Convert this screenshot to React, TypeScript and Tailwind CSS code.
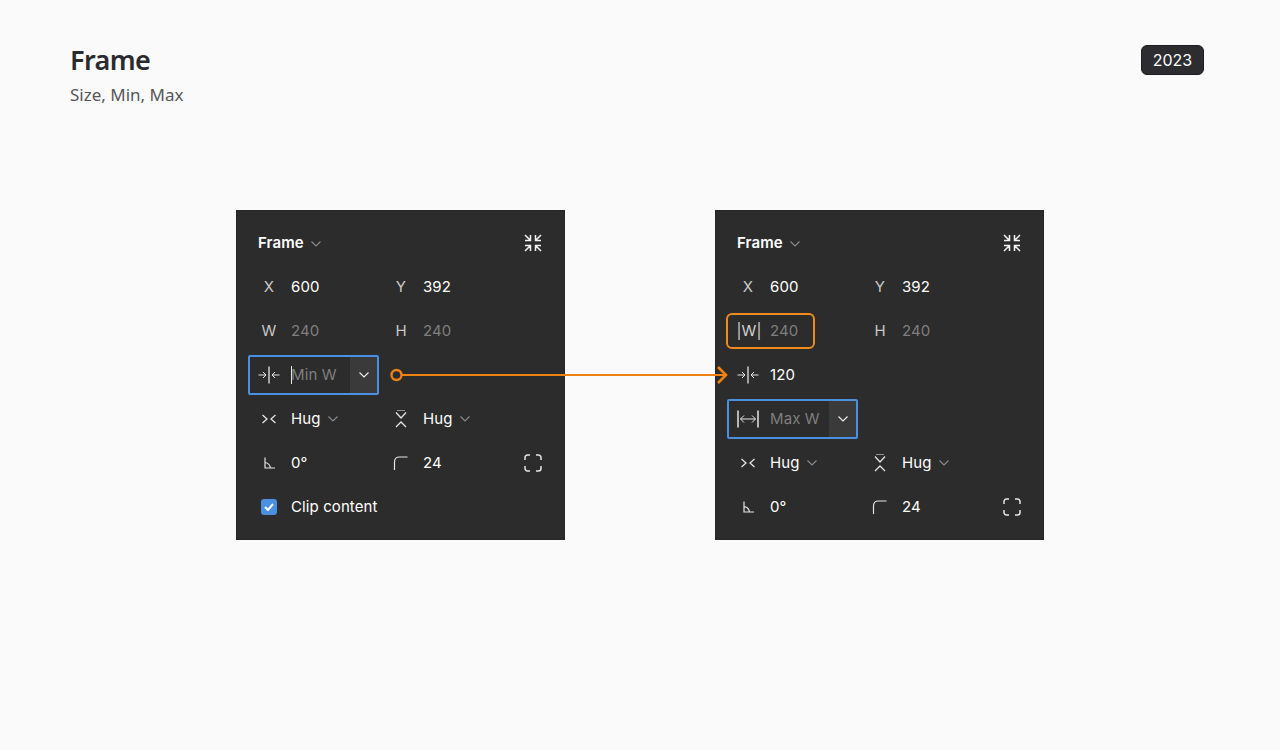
import React from 'react';

const S = { fill: 'none', stroke: 'currentColor', strokeWidth: 1 };

function Ico({ children, w = 24, h = 18 }: { children: React.ReactNode; w?: number; h?: number }) {
  return (
    <svg width={w} height={h} viewBox={`0 0 ${w} ${h}`} {...S} className="text-[#e4e4e4]">
      {children}
    </svg>
  );
}

const MinIcon = () => (
  <Ico>
    <path d="M12 .5v17" strokeWidth="1.300" />
    <path d="M1.500 9H9M6 6l3 3-3 3M22.500 9H15M18 6l-3 3 3 3" />
  </Ico>
);

const MaxIcon = () => (
  <Ico>
    <path d="M2 .5v17M22 .5v17" strokeWidth="1.500" />
    <path d="M4.500 9h15M8 5.500 4.500 9 8 12.500M16 5.500 19.500 9 16 12.500" />
  </Ico>
);

const HugH = () => (
  <Ico>
    <path d="m5.500 5 4.500 4-4.500 4M18.500 5 14 9l4.500 4" strokeWidth="1.300" />
  </Ico>
);

const HugV = () => (
  <Ico w={16} h={20}>
    <path d="M4 1.500h8" strokeWidth="1" opacity="0.55" />
    <path d="M3 3.500 8 9l5-5.500M3 18l5-5 5 5" strokeWidth="1.300" />
  </Ico>
);

const AngleIcon = () => (
  <Ico w={14} h={14}>
    <path d="M3 1.500V12h10M3 6.500c3 .5 5 2.500 5.500 5.500" strokeWidth="1.200" />
  </Ico>
);

const RadiusIcon = () => (
  <Ico w={16} h={16}>
    <path d="M1.500 15V7c0-3 2-5 5-5h8" strokeWidth="1.200" />
  </Ico>
);

const CornersIcon = () => (
  <Ico w={18} h={18}>
    <path d="M1 6V3.500A2.500 2.500 0 0 1 3.500 1H6M12 1h2.500A2.500 2.500 0 0 1 17 3.500V6M17 12v2.500a2.500 2.500 0 0 1-2.500 2.500H12M6 17H3.500A2.500 2.500 0 0 1 1 14.500V12" strokeWidth="1.500" />
  </Ico>
);

const CollapseIcon = () => (
  <svg className="-mt-[2px]" width="18" height="18" viewBox="0 0 18 18" fill="none" stroke="#f2f2f2" strokeWidth="1.500">
    <path d="M1 1l5 5M1 6.500h5.500V1M17 1l-5 5M17 6.500h-5.500V1M1 17l5-5M1 11.500h5.500V17M17 17l-5-5M17 11.500h-5.500V17" />
  </svg>
);

const Chevron = ({ color = '#8c8c8c' }: { color?: string }) => (
  <svg width="10" height="6" viewBox="0 0 10 6" fill="none" stroke={color} strokeWidth="1.100">
    <path d="M.5.5 5 5 9.500.5" />
  </svg>
);

function Label({ children }: { children: React.ReactNode }) {
  return <span className="flex w-[44px] shrink-0 items-center justify-center text-[#c8c8c8]">{children}</span>;
}

function Cell({ label, value, dim, caret }: { label: React.ReactNode; value: string; dim?: boolean; caret?: boolean }) {
  return (
    <div className="flex w-[132px] items-center">
      <Label>{label}</Label>
      <span className={dim ? 'text-[#7f7f7f]' : 'text-white'}>{value}</span>
      {caret && (
        <span className="ml-[7px]">
          <Chevron />
        </span>
      )}
    </div>
  );
}

function Row({ children }: { children: React.ReactNode }) {
  return <div className="flex h-[44px] items-center pl-[10px] pr-[22px]">{children}</div>;
}

function Header() {
  return (
    <div className="flex h-[44px] items-center justify-between pl-[21px] pr-[22px] pt-[1px]">
      <div className="flex items-center gap-[7px]">
        <span className="font-semibold text-white">Frame</span>
        <Chevron />
      </div>
      <CollapseIcon />
    </div>
  );
}

function Field({ icon, text, cursor }: { icon: React.ReactNode; text: string; cursor?: boolean }) {
  return (
    <div className="ml-[1px] flex h-[40px] w-[131px] items-center rounded-[2px] border-2 border-[#4a8fe0]">
      <span className="flex w-[38px] shrink-0 items-center justify-center">{icon}</span>
      <span className="flex h-full flex-1 items-center pl-[3px] text-[#7f7f7f]">
        {cursor && <span className="mr-[-1px] h-[18px] w-[1px] bg-[#e8e8e8]" />}
        {text}
      </span>
      <span className="flex h-full w-[27px] items-center justify-center bg-[#3a3a3a]">
        <Chevron color="#f0f0f0" />
      </span>
    </div>
  );
}

function Panel({ children }: { children: React.ReactNode }) {
  return (
    <div className="flex h-[330px] w-[329px] flex-col border border-[#262626] bg-[#2c2c2c] pt-[10px] font-['Inter',sans-serif] text-[15px] tracking-[0.1px]">
      {children}
    </div>
  );
}

export default function App() {
  return (
    <div className="relative h-[750px] w-[1280px] overflow-hidden bg-[#fafafa] font-['Noto_Sans',sans-serif]">
      <div className="flex items-start justify-between pl-[70px] pr-[76px] pt-[45px]">
        <div>
          <h1 className="text-[27px] font-semibold leading-[30px] tracking-[-0.6px] text-[#2b2b2f]">Frame</h1>
          <p className="mt-[6px] text-[17px] leading-[28px] text-[#56565a]">Size, Min, Max</p>
        </div>
        <span className="flex h-[30px] w-[63px] items-center justify-center rounded-[6px] border border-[#1e1e22] bg-[#2c2c31] font-['Inter',sans-serif] text-[16px] text-white">
          2023
        </span>
      </div>

      <div className="mt-[101px] flex justify-center gap-[150px]">
        <Panel>
          <Header />
          <Row>
            <Cell label="X" value="600" />
            <Cell label="Y" value="392" />
          </Row>
          <Row>
            <Cell label="W" value="240" dim />
            <Cell label="H" value="240" dim />
          </Row>
          <Row>
            <Field icon={<MinIcon />} text="Min W" cursor />
          </Row>
          <Row>
            <Cell label={<HugH />} value="Hug" caret />
            <Cell label={<HugV />} value="Hug" caret />
          </Row>
          <Row>
            <Cell label={<AngleIcon />} value="0°" />
            <Cell label={<RadiusIcon />} value="24" />
            <span className="ml-auto">
              <CornersIcon />
            </span>
          </Row>
          <Row>
            <span className="flex w-[44px] shrink-0 justify-center">
              <span className="flex h-[16px] w-[16px] items-center justify-center rounded-[3px] bg-[#4a8fe0]">
                <svg width="10" height="8" viewBox="0 0 10 8" fill="none" stroke="#fff" strokeWidth="2">
                  <path d="M1 4l3 3 5-6" />
                </svg>
              </span>
            </span>
            <span className="text-white">Clip content</span>
          </Row>
        </Panel>

        <Panel>
          <Header />
          <Row>
            <Cell label="X" value="600" />
            <Cell label="Y" value="392" />
          </Row>
          <Row>
            <div className="flex w-[132px] items-center">
              <div className="flex h-[36px] w-[89px] items-center rounded-[6px] border-2 border-[#ef8a1d]">
                <span className="flex w-[42px] shrink-0 justify-center text-[#d2d2d2]">|W|</span>
                <span className="text-[#7f7f7f]">240</span>
              </div>
            </div>
            <Cell label="H" value="240" dim />
          </Row>
          <Row>
            <Cell label={<MinIcon />} value="120" />
          </Row>
          <Row>
            <Field icon={<MaxIcon />} text="Max W" />
          </Row>
          <Row>
            <Cell label={<HugH />} value="Hug" caret />
            <Cell label={<HugV />} value="Hug" caret />
          </Row>
          <Row>
            <Cell label={<AngleIcon />} value="0°" />
            <Cell label={<RadiusIcon />} value="24" />
            <span className="ml-auto">
              <CornersIcon />
            </span>
          </Row>
        </Panel>
      </div>

      {/* connector sits over both panels */}
      <svg className="absolute left-[388px] top-[362px]" width="344" height="26" viewBox="0 0 344 26" fill="none" stroke="#ef8112" strokeWidth="2">
        <circle cx="8.500" cy="13" r="5" strokeWidth="2.400" />
        <path d="M14 13h324" strokeWidth="2" />
        <path d="M330 5l8 8-8 8" strokeWidth="2.600" />
      </svg>
    </div>
  );
}
